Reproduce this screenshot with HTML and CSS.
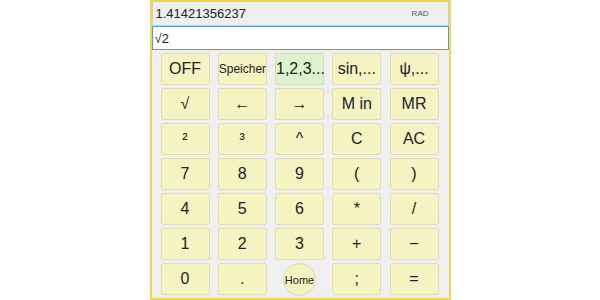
FILE: index.html
```html
<!DOCTYPE html>
<html>
    <head>
        <title>Rechner</title>
        <link rel="stylesheet" href="styles.css">
    </head>
    <body>
        <div class="calc">
            <div class="result">
                <span class="value">1.41421356237</span>
                <span class="mode">RAD</span>
            </div>
            <div class="entry">√2</div>

            <!-- keypad, 5 columns -->
            <div class="keys">
                <button class="key">OFF</button>
                <button class="key small">Speicher</button>
                <button class="key green">1,2,3...</button>
                <button class="key">sin,...</button>
                <button class="key">ψ,...</button>

                <button class="key">√</button>
                <button class="key">←</button>
                <button class="key">→</button>
                <button class="key">M in</button>
                <button class="key">MR</button>

                <button class="key">²</button>
                <button class="key">³</button>
                <button class="key">^</button>
                <button class="key">C</button>
                <button class="key">AC</button>

                <button class="key">7</button>
                <button class="key">8</button>
                <button class="key">9</button>
                <button class="key">(</button>
                <button class="key">)</button>

                <button class="key">4</button>
                <button class="key">5</button>
                <button class="key">6</button>
                <button class="key">*</button>
                <button class="key">/</button>

                <button class="key">1</button>
                <button class="key">2</button>
                <button class="key">3</button>
                <button class="key">+</button>
                <button class="key">−</button>

                <button class="key">0</button>
                <button class="key">.</button>
                <div class="home-cell"><button class="home">Home</button></div>
                <button class="key">;</button>
                <button class="key">=</button>
            </div>
        </div>
    </body>
</html>
```

FILE: styles.css
```css
* {
    box-sizing: border-box;
}
body {
    margin: 0;
    background-color: white;
    font-family: "Liberation Sans", Arial, sans-serif;
    color: #222;
}
.calc {
    width: 301px;
    height: 300px;
    margin: 0 auto;
    border: 2px solid #f3d650;
    border-top-width: 1px;
    background-color: #efefef;
}
.result {
    height: 25px;
    display: flex;
    align-items: center;
    justify-content: space-between;
    padding: 0 19px 0 3px;
    border: 1px solid #cfcfcf;
    background-color: #efefef;
}
.value {
    font-size: 13px;
}
.mode {
    font-size: 8px;
    color: #555;
}
.entry {
    height: 24px;
    display: flex;
    align-items: center;
    padding-left: 2px;
    font-size: 13px;
    background-color: white;
    border: 1px solid #5b9bd5;
}
.keys {
    display: grid;
    grid-template-columns: repeat(5, 49px);
    grid-auto-rows: 32px;
    column-gap: 8.25px;
    row-gap: 3px;
    padding: 3px 0 0 9px;
}
.key {
    font-family: "Liberation Sans", Arial, sans-serif;
    font-size: 16px;
    color: #222;
    background-color: #f4f3c1;
    border: 1px solid #e0dfb4;
    border-radius: 2px;
    padding: 0;
}
.key.small {
    font-size: 12px;
}
.key.green {
    background-color: #dcf3cb;
    border-color: #cbe3ba;
}
.home-cell {
    display: flex;
    justify-content: center;
}
.home {
    width: 33px;
    height: 33px;
    border-radius: 50%;
    border: 1px solid #dedcb0;
    background-color: #f4f3c1;
    font-family: "Liberation Sans", Arial, sans-serif;
    font-size: 11px;
    color: #222;
    padding: 0;
}
```
